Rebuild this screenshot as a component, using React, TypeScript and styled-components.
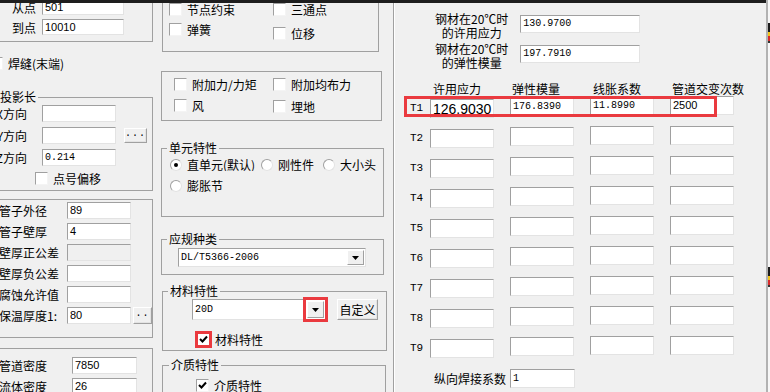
import React from "react";
import styled, { createGlobalStyle, css } from "styled-components";

const CJK = `"Noto Sans CJK SC", sans-serif`;
const MONO = `"Liberation Mono", "Noto Sans CJK SC", monospace`;
const SANS = `"Liberation Sans", "Noto Sans CJK SC", sans-serif`;
const RED = "#ea3a3f";

const GlobalStyle = createGlobalStyle`
  html, body { margin: 0; padding: 0; background: #f0f0f0; }
  body { font-family: ${CJK}; font-size: 12px; color: #000; }
  * { box-sizing: border-box; }
`;

const Screen = styled.div`
  position: relative;
  width: 770px;
  height: 392px;
  overflow: hidden;
  display: flex;
  align-items: flex-start;
  background: #f0f0f0;
  font-family: ${CJK};
  font-size: 12px;
  line-height: 12px;
`;

const TopEdge = styled.div`
  position: absolute;
  left: 0;
  top: 0;
  width: 766px;
  height: 3px;
  background: #1e1e1e;
  z-index: 5;
`;

const LeftCol = styled.div`
  flex: 0 0 183px;
  margin-left: -30px;
  display: flex;
  flex-direction: column;
`;

const MidCol = styled.div`
  flex: 0 0 226px;
  margin-left: 8px;
  display: flex;
  flex-direction: column;
`;

const Divider = styled.div`
  flex: 0 0 2px;
  align-self: stretch;
  margin-left: 6px;
  border-left: 1px solid #a0a0a0;
  border-right: 1px solid #ffffff;
`;

const RightPanel = styled.div`
  position: relative;
  flex: 0 0 371px;
  align-self: stretch;
  display: flex;
  flex-direction: column;
`;

const EdgeStrip = styled.div`
  flex: 0 0 4px;
  align-self: stretch;
  border-left: 2px solid #b2b2b2;
  background: #f7f7f7;
  display: flex;
  flex-direction: column;
`;

const Group = styled.fieldset<{ $mt?: number; $ml?: number; $w?: number; $pt?: number; $pb?: number }>`
  margin: ${(p) => p.$mt ?? 0}px 0 0 ${(p) => p.$ml ?? 0}px;
  width: ${(p) => (p.$w ? `${p.$w}px` : "auto")};
  padding: ${(p) => p.$pt ?? 0}px 0 ${(p) => p.$pb ?? 0}px;
  border: 1px solid #a0a0a0;
  min-width: 0;
`;

const Title = styled.legend<{ $lx?: number }>`
  margin-left: ${(p) => p.$lx ?? 5}px;
  padding: 0 2px;
  font-size: 12px;
  line-height: 12px;
`;

const Body = styled.div<{ $pl?: number }>`
  display: flex;
  flex-direction: column;
  padding-left: ${(p) => p.$pl ?? 0}px;
`;

const Row = styled.div<{ $pl?: number; $mt?: number }>`
  display: flex;
  align-items: center;
  padding-left: ${(p) => p.$pl ?? 0}px;
  margin-top: ${(p) => p.$mt ?? 0}px;
`;

const Label = styled.span<{ $w: number; $align?: string }>`
  flex: 0 0 ${(p) => p.$w}px;
  text-align: ${(p) => p.$align ?? "left"};
  white-space: nowrap;
  overflow: hidden;
  line-height: 13px;
`;

type FontKind = "sans" | "mono" | "big";
const fontFor = (f?: FontKind) =>
  f === "mono"
    ? css`font-family: ${MONO}; font-size: 10px;`
    : f === "big"
    ? css`font-family: ${SANS}; font-size: 14px;`
    : css`font-family: ${SANS}; font-size: 11px;`;

const TextBox = styled.div<{ $w: number; $h?: number; $ml?: number; $mt?: number; $font?: FontKind; $off?: boolean }>`
  flex: 0 0 ${(p) => p.$w}px;
  width: ${(p) => p.$w}px;
  height: ${(p) => p.$h ?? 17}px;
  margin-left: ${(p) => p.$ml ?? 0}px;
  margin-top: ${(p) => p.$mt ?? 0}px;
  background: ${(p) => (p.$off ? "#f0f0f0" : "#ffffff")};
  border: 1px solid;
  border-color: #a0a0a0 #e3e3e3 #e3e3e3 #a0a0a0;
  display: flex;
  align-items: center;
  padding-left: 2px;
  white-space: nowrap;
  overflow: hidden;
  line-height: 1;
  ${(p) => fontFor(p.$font)}
`;

const PushButton = styled.div<{ $w: number; $h: number; $ml?: number }>`
  flex: 0 0 ${(p) => p.$w}px;
  height: ${(p) => p.$h}px;
  margin-left: ${(p) => p.$ml ?? 0}px;
  background: #f0f0f0;
  border: 1px solid;
  border-color: #ffffff #a0a0a0 #a0a0a0 #ffffff;
  box-shadow: inset -1px -1px 0 #e3e3e3;
  display: flex;
  align-items: center;
  justify-content: center;
  font-size: 12px;
  line-height: 12px;
`;

const Dots = styled.span`
  font-family: ${MONO};
  font-size: 10px;
  letter-spacing: 1px;
  margin-top: -3px;
`;

const Box = styled.span<{ $mark?: boolean }>`
  flex: 0 0 13px;
  width: 13px;
  height: 13px;
  background: #ffffff;
  border: 1px solid;
  border-color: #a0a0a0 #f4f4f4 #f4f4f4 #a0a0a0;
  display: inline-flex;
  align-items: center;
  justify-content: center;
  ${(p) => p.$mark && css`outline: 3px solid ${RED}; outline-offset: -1px;`}
`;

const CheckItem = styled.div<{ $dy?: number; $pl?: number; $mt?: number }>`
  display: flex;
  align-items: center;
  gap: 5px;
  margin-top: ${(p) => (p.$dy ?? 0) + (p.$mt ?? 0)}px;
  padding-left: ${(p) => p.$pl ?? 0}px;
  line-height: 13px;
  white-space: nowrap;
`;

const CheckGrid = styled.div<{ $col: number; $gap: number }>`
  display: grid;
  grid-template-columns: ${(p) => p.$col}px auto;
  row-gap: ${(p) => p.$gap}px;
  align-items: start;
`;

const Dot = styled.span<{ $on?: boolean }>`
  flex: 0 0 12px;
  width: 12px;
  height: 12px;
  border-radius: 50%;
  background: #ffffff;
  border: 1px solid;
  border-color: #a0a0a0 #e3e3e3 #e3e3e3 #a0a0a0;
  display: inline-flex;
  align-items: center;
  justify-content: center;
  &::after {
    content: "";
    width: 4px;
    height: 4px;
    border-radius: 50%;
    background: #000;
    display: ${(p) => (p.$on ? "block" : "none")};
  }
`;

const RadioRow = styled.div<{ $mt?: number }>`
  display: flex;
  align-items: center;
  margin-top: ${(p) => p.$mt ?? 0}px;
`;

const RadioItem = styled.div<{ $w?: number }>`
  flex: 0 0 ${(p) => (p.$w ? `${p.$w}px` : "auto")};
  display: flex;
  align-items: center;
  gap: 5px;
  line-height: 13px;
`;

const RadioText = styled.span<{ $clip?: number }>`
  white-space: nowrap;
  overflow: hidden;
  ${(p) => p.$clip && css`width: ${p.$clip}px;`}
`;

const Combo = styled.div<{ $w: number; $h: number }>`
  flex: 0 0 ${(p) => p.$w}px;
  height: ${(p) => p.$h}px;
  display: flex;
  background: #ffffff;
  border: 1px solid;
  border-color: #a0a0a0 #e3e3e3 #e3e3e3 #a0a0a0;
`;

const ComboText = styled.span`
  flex: 1;
  display: flex;
  align-items: center;
  padding-left: 2px;
  font-family: ${MONO};
  font-size: 10px;
`;

const DropBtn = styled.span<{ $mark?: boolean }>`
  flex: 0 0 17px;
  margin: 1px;
  background: #f0f0f0;
  border: 1px solid;
  border-color: #ffffff #a0a0a0 #a0a0a0 #ffffff;
  display: flex;
  align-items: center;
  justify-content: center;
  ${(p) => p.$mark && css`outline: 3px solid ${RED}; outline-offset: 1px;`}
`;

const SpecRow = styled.div<{ $mt: number }>`
  display: flex;
  align-items: flex-start;
  padding-left: 40px;
  margin-top: ${(p) => p.$mt}px;
`;

const SpecLabel = styled.div`
  flex: 0 0 72px;
  text-align: center;
  line-height: 14px;
  white-space: nowrap;
`;

const HeadRow = styled.div`
  display: flex;
  padding-left: 38px;
  margin-top: 13px;
  line-height: 12px;
`;

const Head = styled.span<{ $w?: number }>`
  flex: 0 0 ${(p) => (p.$w ? `${p.$w}px` : "auto")};
  white-space: nowrap;
`;

const TRow = styled.div<{ $mt: number }>`
  display: flex;
  align-items: flex-start;
  padding-left: 15px;
  height: 22px;
  margin-top: ${(p) => p.$mt}px;
`;

const TLabel = styled.span`
  flex: 0 0 20px;
  margin-top: 6px;
  font-family: ${MONO};
  font-size: 11px;
  line-height: 12px;
`;

const Cells = styled.div`
  display: flex;
  gap: 16px;
`;

const RowMark = styled.div`
  position: absolute;
  left: 9px;
  top: 96px;
  width: 313px;
  height: 21px;
  border: 3px solid ${RED};
  pointer-events: none;
`;

const Check = () => (
  <svg width="9" height="9" viewBox="0 0 9 9">
    <polyline points="1,4 3.5,6.5 8,1.5" fill="none" stroke="#000" strokeWidth="2" />
  </svg>
);

const Arrow = () => (
  <svg width="7" height="4" viewBox="0 0 7 4">
    <polygon points="0,0 7,0 3.5,4" fill="#000" />
  </svg>
);

const Penguin = ({ mt }: { mt: number }) => (
  <svg width="2" height="22" viewBox="0 0 2 22" style={{ marginTop: mt }}>
    <rect x="0" y="0" width="2" height="9" fill="#1b1b1b" />
    <rect x="0" y="9" width="2" height="4" fill="#f2c318" />
    <rect x="0" y="13" width="2" height="5" fill="#d92a2a" />
    <rect x="0" y="18" width="2" height="2" fill="#333" />
  </svg>
);

const tubeRows: { label: string; value?: string; off?: boolean; more?: boolean }[] = [
  { label: "管子外径", value: "89" },
  { label: "管子壁厚", value: "4" },
  { label: "壁厚正公差", off: true },
  { label: "壁厚负公差" },
  { label: "腐蚀允许值" },
  { label: "保温厚度1:", value: "80", more: true },
];

const tempRows = [
  ["126.9030", "176.8390", "11.8990", "2500"],
  [],
  [],
  [],
  [],
  [],
  [],
  [],
  [],
];
const cellDy = [3, 1, 0, 0];

export default function App() {
  return (
    <>
      <GlobalStyle />
      <Screen>
        <TopEdge />

        <LeftCol>
          <Group $mt={-11} $pt={9} $pb={6}>
            <Row>
              <Label $w={65} $align="right">从点</Label>
              <TextBox $w={82} $h={16} $ml={6}>501</TextBox>
            </Row>
            <Row $mt={4}>
              <Label $w={65} $align="right">到点</Label>
              <TextBox $w={82} $h={16} $ml={6}>10010</TextBox>
            </Row>
          </Group>

          <CheckItem $mt={15} $pl={20}>
            <Box />
            <span>焊缝(末端)</span>
          </CheckItem>

          <Group $mt={21} $pt={2} $pb={5}>
            <Title $lx={27}>投影长</Title>
            <Body>
              <Row>
                <Label $w={56} $align="right">X方向</Label>
                <TextBox $w={74} $ml={15} />
              </Row>
              <Row $mt={5}>
                <Label $w={56} $align="right">Y方向</Label>
                <TextBox $w={74} $ml={15} />
                <PushButton $w={23} $h={15} $ml={8}>
                  <Dots>...</Dots>
                </PushButton>
              </Row>
              <Row $mt={5}>
                <Label $w={56} $align="right">Z方向</Label>
                <TextBox $w={74} $ml={15} $font="mono">0.214</TextBox>
              </Row>
              <CheckItem $mt={6} $pl={64}>
                <Box />
                <span>点号偏移</span>
              </CheckItem>
            </Body>
          </Group>

          <Group $mt={8} $pt={2} $pb={13}>
            <Body $pl={28}>
              {tubeRows.map((r, i) => (
                <Row key={r.label} $mt={i ? 4 : 0}>
                  <Label $w={68}>{r.label}</Label>
                  <TextBox $w={64} $off={r.off}>{r.value}</TextBox>
                  {r.more && (
                    <PushButton $w={19} $h={17} $ml={2}>
                      <Dots>..</Dots>
                    </PushButton>
                  )}
                </Row>
              ))}
            </Body>
          </Group>

          <Group $mt={10} $pt={8} $pb={6}>
            <Body $pl={28}>
              <Row>
                <Label $w={73}>管道密度</Label>
                <TextBox $w={65}>7850</TextBox>
              </Row>
              <Row $mt={4}>
                <Label $w={73}>流体密度</Label>
                <TextBox $w={65}>26</TextBox>
              </Row>
            </Body>
          </Group>
        </LeftCol>

        <MidCol>
          <Group $mt={-20} $ml={1} $w={217} $pt={22} $pb={11}>
            <Body $pl={6}>
              <CheckGrid $col={104} $gap={7}>
                <CheckItem><Box /><span>节点约束</span></CheckItem>
                <CheckItem><Box /><span>三通点</span></CheckItem>
                <CheckItem><Box /><span>弹簧</span></CheckItem>
                <CheckItem $dy={4}><Box /><span>位移</span></CheckItem>
              </CheckGrid>
            </Body>
          </Group>

          <Group $mt={19} $w={221} $pt={6} $pb={7}>
            <Body $pl={12}>
              <CheckGrid $col={99} $gap={8}>
                <CheckItem><Box /><span>附加力/力矩</span></CheckItem>
                <CheckItem><Box /><span>附加均布力</span></CheckItem>
                <CheckItem><Box /><span>风</span></CheckItem>
                <CheckItem $dy={1}><Box /><span>埋地</span></CheckItem>
              </CheckGrid>
            </Body>
          </Group>

          <Group $mt={21} $w={223} $pt={4} $pb={24}>
            <Title $lx={5}>单元特性</Title>
            <Body $pl={8}>
              <RadioRow>
                <RadioItem $w={91}>
                  <Dot $on />
                  <RadioText $clip={71}>直单元(默认)</RadioText>
                </RadioItem>
                <RadioItem $w={62}>
                  <Dot />
                  <RadioText>刚性件</RadioText>
                </RadioItem>
                <RadioItem>
                  <Dot />
                  <RadioText>大小头</RadioText>
                </RadioItem>
              </RadioRow>
              <RadioRow $mt={8}>
                <RadioItem>
                  <Dot />
                  <RadioText>膨胀节</RadioText>
                </RadioItem>
              </RadioRow>
            </Body>
          </Group>

          <Group $mt={16} $w={223} $pt={3} $pb={7}>
            <Title $lx={5}>应规种类</Title>
            <Body $pl={16}>
              <Row>
                <Combo $w={188} $h={19}>
                  <ComboText>DL/T5366-2006</ComboText>
                  <DropBtn><Arrow /></DropBtn>
                </Combo>
              </Row>
            </Body>
          </Group>

          <Group $mt={10} $ml={1} $w={225} $pt={2} $pb={4}>
            <Title $lx={5}>材料特性</Title>
            <Body $pl={29}>
              <Row>
                <Combo $w={134} $h={21}>
                  <ComboText>20D</ComboText>
                  <DropBtn $mark><Arrow /></DropBtn>
                </Combo>
                <PushButton $w={41} $h={21} $ml={11}>自定义</PushButton>
              </Row>
              <CheckItem $mt={13} $pl={5}>
                <Box $mark><Check /></Box>
                <span>材料特性</span>
              </CheckItem>
            </Body>
          </Group>

          <Group $mt={8} $ml={1} $w={224} $pt={8} $pb={4}>
            <Title $lx={6}>介质特性</Title>
            <Body $pl={33}>
              <CheckItem>
                <Box><Check /></Box>
                <span>介质特性</span>
              </CheckItem>
            </Body>
          </Group>
        </MidCol>

        <Divider />

        <RightPanel>
          <SpecRow $mt={12}>
            <SpecLabel>钢材在20℃时<br />的许用应力</SpecLabel>
            <TextBox $w={120} $h={18} $ml={12} $mt={3} $font="mono">130.9700</TextBox>
          </SpecRow>
          <SpecRow $mt={2}>
            <SpecLabel>钢材在20℃时<br />的弹性模量</SpecLabel>
            <TextBox $w={120} $h={18} $ml={12} $mt={3} $font="mono">197.7910</TextBox>
          </SpecRow>

          <HeadRow>
            <Head $w={79}>许用应力</Head>
            <Head $w={81}>弹性模量</Head>
            <Head $w={79}>线胀系数</Head>
            <Head>管道交变次数</Head>
          </HeadRow>

          {tempRows.map((vals, i) => (
            <TRow key={i} $mt={i ? 8 : 1}>
              <TLabel>T{i + 1}</TLabel>
              <Cells>
                {cellDy.map((dy, c) => (
                  <TextBox
                    key={c}
                    $w={64}
                    $h={19}
                    $mt={dy}
                    $font={c === 0 ? "big" : c === 3 ? "sans" : "mono"}
                  >
                    {vals[c]}
                  </TextBox>
                ))}
              </Cells>
            </TRow>
          ))}

          <Row $pl={39} $mt={11}>
            <Label $w={72}>纵向焊接系数</Label>
            <TextBox $w={65} $h={19} $ml={4} $font="mono">1</TextBox>
          </Row>

          <RowMark />
        </RightPanel>

        <EdgeStrip>
          <Penguin mt={23} />
          <Penguin mt={222} />
        </EdgeStrip>
      </Screen>
    </>
  );
}
